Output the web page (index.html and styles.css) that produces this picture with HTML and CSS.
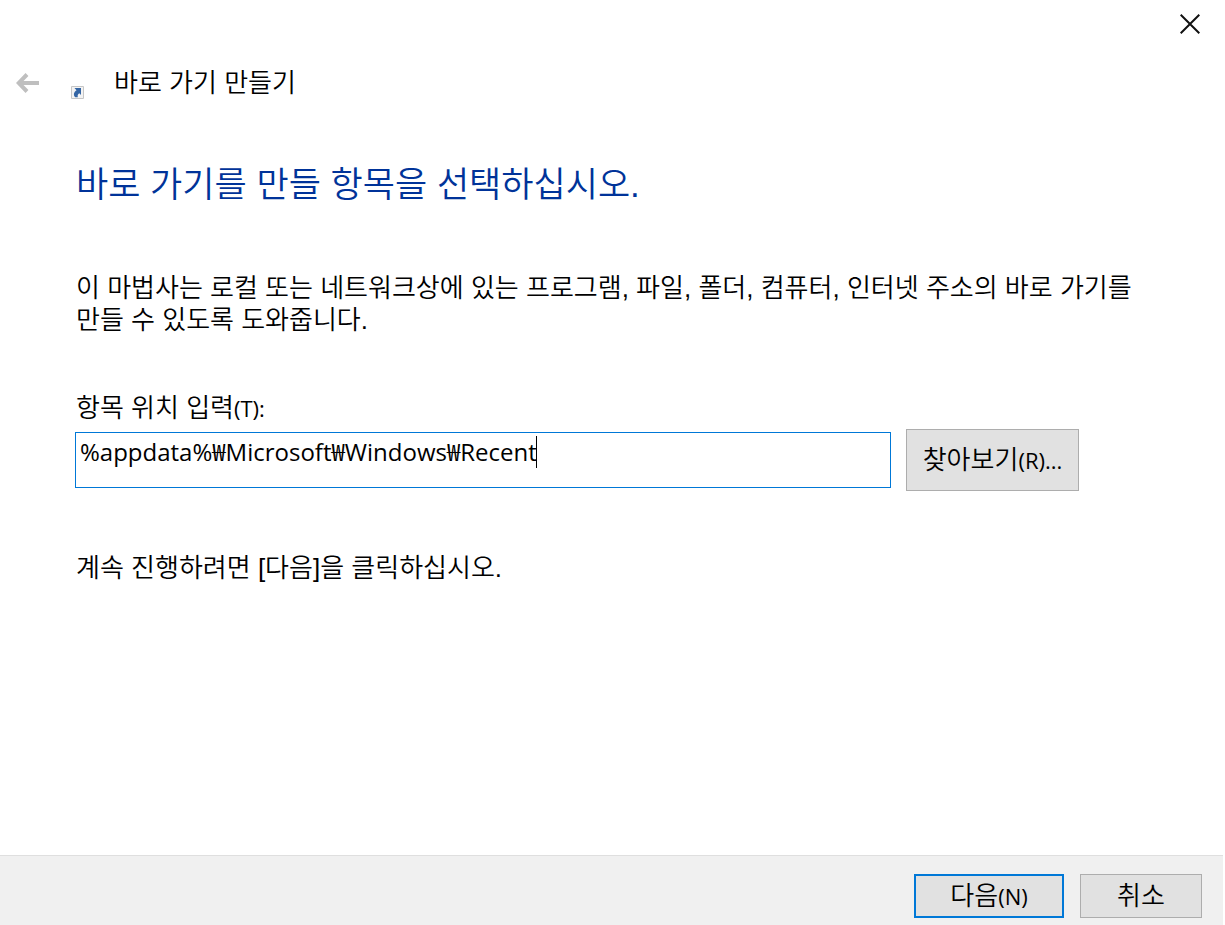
FILE: index.html
```html
<!DOCTYPE html>
<html lang="ko">
<head>
<meta charset="utf-8">
<title>바로 가기 만들기</title>
<link rel="stylesheet" href="styles.css">
</head>
<body>
<form class="wizard">
  <div class="caption">
    <button class="close" type="button" aria-label="닫기">
      <svg width="20" height="20" viewBox="0 0 20 20" fill="none" stroke="#111" stroke-width="2"><path d="M.7.7l18.6 18.6M19.3.7L.7 19.3"/></svg>
    </button>
  </div>
  <header class="header">
    <button class="back" type="button" aria-label="뒤로" disabled>
      <svg width="24" height="20" viewBox="0 0 24 20" fill="none" stroke="#bfbfbf" stroke-width="4"><path d="M23 10H3M11 1.5L2.7 10l8.3 8.5"/></svg>
    </button>
    <svg class="shortcut" width="13" height="13" viewBox="0 0 13 13"><path fill="#f3f3f3" stroke="#c6c6c6" d="M.5.5h12v12H.5z"/><path fill="#3465a4" d="M3.500 2H10v7L8.300 7.200C6.800 8.200 6.400 9.400 6.800 11.300H4.300C2 8.800 2.800 6 5.500 4.200z"/></svg>
    <span class="title">바로 가기 만들기</span>
  </header>
  <main class="content">
    <h1 class="heading">바로 가기를 만들 항목을 선택하십시오.</h1>
    <p class="intro">이 마법사는 로컬 또는 네트워크상에 있는 프로그램, 파일, 폴더, 컴퓨터, 인터넷 주소의 바로 가기를 만들 수 있도록 도와줍니다.</p>
    <label class="label" for="location">항목 위치 입력<span class="key">(T):</span></label>
    <div class="row">
      <div class="field">
        <input class="input" id="location" type="text" value="%appdata%₩Microsoft₩Windows₩Recent" spellcheck="false">
        <span class="caret"></span>
      </div>
      <button class="button browse" type="button">찾아보기<span class="key">(R)...</span></button>
    </div>
    <p class="hint">계속 진행하려면 [다음]을 클릭하십시오.</p>
  </main>
  <footer class="footer">
    <button class="button next" type="submit">다음<span class="key">(N)</span></button>
    <button class="button cancel" type="button">취소</button>
  </footer>
</form>
</body>
</html>
```
FILE: styles.css
```css
* { box-sizing: border-box; }
body {
  margin: 0;
  background: #fff;
  color: #000;
  font: 350 26px/32px "Liberation Sans", "Noto Sans CJK KR", sans-serif;
}
.wizard { display: flex; flex-direction: column; min-height: 100vh; padding-right: 2px; }
.caption { display: flex; justify-content: flex-end; padding: 4px 13px 0 0; }
.close, .back { display: flex; align-items: center; justify-content: center; padding: 0; border: 0; background: none; }
.close { width: 40px; height: 40px; }
.header { display: flex; align-items: center; height: 40px; margin-top: 19px; padding-left: 16px; }
.back { width: 24px; height: 24px; }
.shortcut { margin: 19px 30px 0 31px; }
.content { flex: 1; padding: 60px 74px 0 76px; }
.heading { margin: 0; color: #003399; font-size: 35px; font-weight: 350; line-height: 44px; }
.intro { margin: 65px 0 56px; word-break: keep-all; }
.label { display: block; }
.key { font: 400 22px/24px "Open Sans", sans-serif; }
.row { display: flex; align-items: center; gap: 15px; margin: 5px 70px 0 -1px; }
.field { position: relative; flex: 1; display: flex; }
.input {
  width: 100%;
  height: 56px;
  padding: 0 4px 20px;
  border: 1px solid #0078d7;
  border-radius: 0;
  outline: 0;
  background: #fff;
  color: #000;
  font: 400 24px/32px "Open Sans", "Noto Sans CJK KR", sans-serif;
}
.caret { position: absolute; top: 4px; left: 461px; width: 1px; height: 32px; background: #000; }
.button { padding: 0 15px; border: 1px solid #adadad; background: #e1e1e1; color: #000; font: inherit; white-space: nowrap; }
.browse { width: 173px; height: 62px; }
.hint { margin: 61px 0 0; }
.footer {
  display: flex;
  justify-content: flex-end;
  gap: 16px;
  padding: 18px 21px 7px;
  border-top: 1px solid #dfdfdf;
  background: #f0f0f0;
}
.next, .cancel { height: 44px; }
.next { width: 150px; border: 2px solid #0078d7; }
.cancel { width: 122px; }
```
